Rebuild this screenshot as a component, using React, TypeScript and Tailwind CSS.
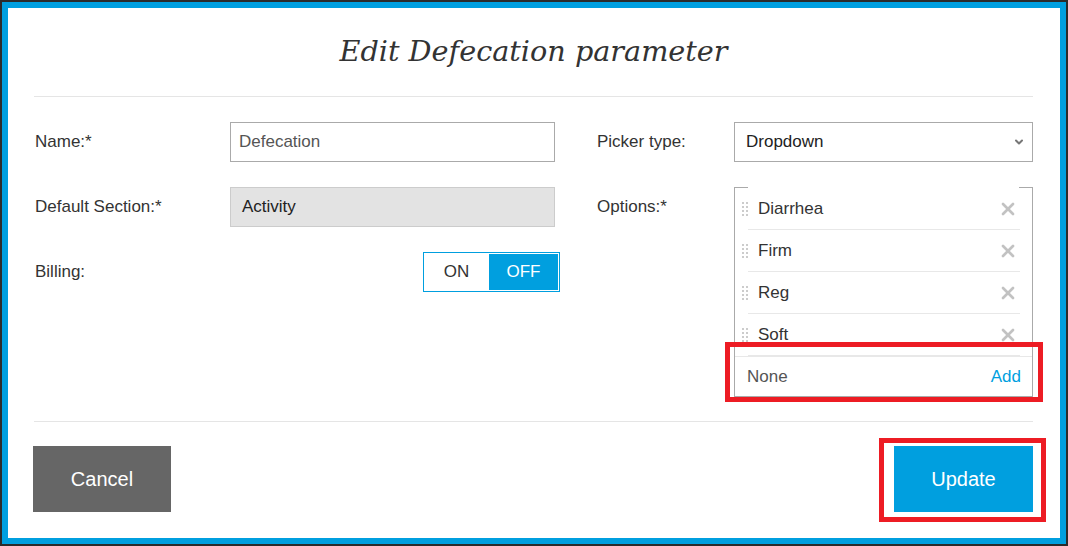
import { ChevronDown, X } from 'lucide-react';

const OPTIONS = ['Diarrhea', 'Firm', 'Reg', 'Soft'];

function DragHandle() {
  return (
    <div className="grid w-[6px] shrink-0 grid-cols-2 gap-[2px]">
      {Array.from({ length: 8 }).map((_, i) => (
        <span key={i} className="h-[2px] w-[2px] bg-[#cccccc]" />
      ))}
    </div>
  );
}

export default function App() {
  return (
    <div
      className="h-[546px] w-[1068px] border-2 border-[#2b2b2b] bg-white text-[17px] text-[#333333]"
      style={{ fontFamily: '"Liberation Sans", Arial, sans-serif' }}
    >
      <div className="flex h-full flex-col border-[6px] border-[#009fdf] bg-white">
        {/* Header */}
        <div className="mx-[26px] mr-[27px] flex h-[89px] items-center justify-center border-b border-[#e5e5e5] pb-px">
          <h1
            className="text-[28.7px] italic text-[#333333]"
            style={{ fontFamily: '"DejaVu Serif", Georgia, serif' }}
          >
            Edit Defecation parameter
          </h1>
        </div>

        {/* Body */}
        <div className="mx-[26px] mr-[27px] flex border-b border-[#e5e5e5] pb-[24px] pt-[25px]">
          {/* Left column */}
          <div className="flex w-[562px] flex-col gap-[25px]">
            <div className="flex items-center">
              <label className="w-[196px] pl-px">Name:*</label>
              <input
                readOnly
                value="Defecation"
                className="h-[40px] w-[325px] border border-[#aaaaaa] px-[8px] text-[17px] text-[#555555] outline-none"
              />
            </div>
            <div className="flex items-center">
              <label className="w-[196px] pl-px">Default Section:*</label>
              <div className="flex h-[40px] w-[325px] items-center border border-[#cccccc] bg-[#e3e3e3] px-[11px] text-[#222222]">
                Activity
              </div>
            </div>
            <div className="flex items-center">
              <label className="w-[389px] pl-px">Billing:</label>
              <div className="flex h-[40px] w-[137px] border border-[#009fdf] bg-white py-px pr-px">
                <button className="flex w-[65px] items-center justify-center text-[#333333]">ON</button>
                <button className="flex flex-1 items-center justify-center bg-[#009fdf] text-white">OFF</button>
              </div>
            </div>
          </div>

          {/* Right column */}
          <div className="flex flex-1 flex-col gap-[25px]">
            <div className="flex items-center">
              <label className="w-[138px] pl-px">Picker type:</label>
              <div className="relative flex h-[40px] flex-1 items-center border border-[#aaaaaa] pl-[11px] text-[#222222]">
                Dropdown
                <ChevronDown
                  className="absolute right-[7px] top-[13px] h-[12px] w-[12px] text-[#777777]"
                  strokeWidth={4}
                />
              </div>
            </div>
            <div className="flex items-start">
              <label className="flex h-[40px] w-[138px] items-center pl-px">Options:*</label>
              <div className="relative flex h-[210px] flex-1 flex-col border-x border-b border-[#aaaaaa]">
                <div className="flex h-px">
                  <span className="w-[13px] bg-[#aaaaaa]" />
                  <span className="flex-1" />
                  <span className="w-[13px] bg-[#aaaaaa]" />
                </div>
                <div className="h-[168px] overflow-hidden pl-[7px] pr-[12px]">
                  {OPTIONS.map((o) => (
                    <div key={o} className="flex h-[42px] items-center">
                      <DragHandle />
                      <div className="flex h-full flex-1 items-center justify-between border-b border-[#e8e8e8] pl-[10px] pr-[2px] pt-px">
                        <span className="text-[#333333]">{o}</span>
                        <X className="h-[20px] w-[20px] text-[#c2c2c2]" strokeWidth={3.2} />
                      </div>
                    </div>
                  ))}
                </div>
                <div className="flex h-[40px] items-center justify-between border-t border-[#e8e8e8] pl-[12px] pr-[11px]">
                  <span className="text-[#555555]">None</span>
                  <button className="text-[#009fdf]">Add</button>
                </div>
                <div className="pointer-events-none absolute left-[-10px] top-[155px] h-[60px] w-[318px] border-[5px] border-[#ed1c24]" />
              </div>
            </div>
          </div>
        </div>

        {/* Footer */}
        <div className="mx-[26px] mr-[27px] flex items-start justify-between pt-[24px]">
          <button className="-ml-px h-[66px] w-[138px] bg-[#666666] text-[20px] text-white">Cancel</button>
          <div className="relative">
            <button className="h-[66px] w-[139px] bg-[#009fdf] text-[20px] text-white">Update</button>
            <div className="pointer-events-none absolute left-[-15px] top-[-8px] h-[84px] w-[167px] border-[5px] border-[#ed1c24]" />
          </div>
        </div>
      </div>
    </div>
  );
}
